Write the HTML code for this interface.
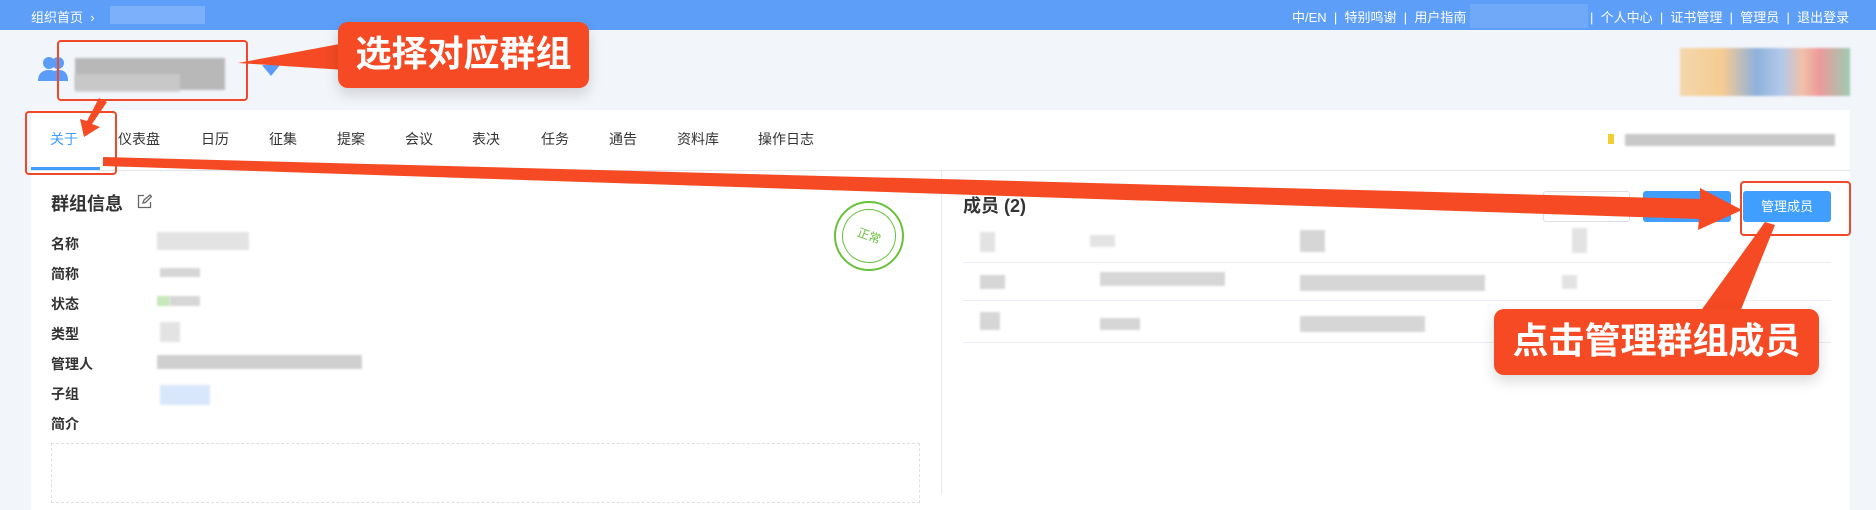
<!DOCTYPE html>
<html><head><meta charset="utf-8"><style>
*{margin:0;padding:0;box-sizing:border-box}
body{width:1876px;height:494px;overflow:hidden;background:#f2f5fa;font-family:"Liberation Sans","Noto Sans CJK SC",sans-serif;position:relative;color:#333}
.a{position:absolute}
.top{left:0;top:0;width:1876px;height:30px;background:#5c9ef8;color:#fff;font-size:13px}
.card{left:31px;top:110px;width:1819px;height:400px;background:#fff}
.tab{position:absolute;top:129px;font-size:14px;color:#333}
.lbl{position:absolute;left:51px;font-size:14px;color:#333;font-weight:bold}
.blur{position:absolute;background:#ccc;opacity:.8;filter:blur(1px)}
.btn{position:absolute;top:191px;height:31px;border-radius:3px;font-size:13px;color:#fff;text-align:center;line-height:31px}
.call{position:absolute;background:#f54a23;color:#fff;font-weight:bold;border-radius:10px;text-align:center;box-shadow:0 6px 14px rgba(0,0,0,.15)}
.rb{position:absolute;border:2px solid #f0492a;border-radius:4px}
</style></head><body>
<div class="a top">
 <span class="a" style="left:31px;top:7px">组织首页 &nbsp;›</span>
 <div class="a" style="left:110px;top:6px;width:95px;height:18px;background:#8ab8fb;opacity:.7"></div>
 <span class="a" style="left:1292px;top:7px;white-space:nowrap">中/EN &nbsp;| &nbsp;特别鸣谢 &nbsp;| &nbsp;用户指南</span>
 <div class="a" style="left:1470px;top:4px;width:118px;height:24px;background:#7aaefa;opacity:.7"></div>
 <span class="a" style="left:1590px;top:7px;white-space:nowrap">| &nbsp;个人中心 &nbsp;| &nbsp;证书管理 &nbsp;| &nbsp;管理员 &nbsp;| &nbsp;退出登录</span>
</div>
<svg class="a" style="left:38px;top:55px" width="30" height="28" viewBox="0 0 30 28"><circle cx="11" cy="8" r="6" fill="#5a9cf8"/><circle cx="20" cy="8" r="6" fill="#5a9cf8"/><path d="M0 26c0-8 5-11 11-11s11 3 11 11z" fill="#5a9cf8"/><path d="M12 26c0-8 4-11 9-11s9 3 9 11z" fill="#5a9cf8"/></svg>
<div class="blur" style="left:75px;top:58px;width:150px;height:32px;background:#aaa"></div>
<div class="blur" style="left:75px;top:74px;width:105px;height:18px;background:#ccc"></div>
<div class="a" style="left:262px;top:65px;width:0;height:0;border-left:9px solid transparent;border-right:9px solid transparent;border-top:11px solid #5a9cf8"></div>
<div class="a" style="left:1680px;top:48px;width:170px;height:48px;background:linear-gradient(90deg,#f5d3a0 0,#f6c480 25%,#7ea6d8 45%,#a8c2e6 60%,#f3b89b 72%,#ec8a8a 82%,#8fc4a6 100%);opacity:.85;filter:blur(1px)"></div>
<div class="a card"></div>
<div class="tab" style="left:50px;color:#409eff">关于</div>
<div class="a" style="left:31px;top:167px;width:69px;height:3px;background:#409eff"></div>
<div class="tab" style="left:118px">仪表盘</div><div class="tab" style="left:201px">日历</div><div class="tab" style="left:269px">征集</div><div class="tab" style="left:337px">提案</div><div class="tab" style="left:405px">会议</div><div class="tab" style="left:472px">表决</div><div class="tab" style="left:541px">任务</div><div class="tab" style="left:609px">通告</div><div class="tab" style="left:677px">资料库</div><div class="tab" style="left:758px">操作日志</div>
<div class="a" style="left:1608px;top:134px;width:6px;height:10px;background:#f0d030"></div>
<div class="blur" style="left:1625px;top:134px;width:210px;height:12px;background:#bbb"></div>
<div class="a" style="left:31px;top:170px;width:1819px;height:1px;background:#e2e4ec"></div>
<div class="a" style="left:941px;top:171px;width:1px;height:323px;background:#e8eaf0"></div>
<div class="a" style="left:51px;top:190px;font-size:18px;font-weight:bold">群组信息</div>
<svg class="a" style="left:137px;top:194px" width="15" height="15" viewBox="0 0 15 15" fill="none" stroke="#666" stroke-width="1.3"><path d="M7 1.5H1.5v12h12V8"/><path d="M6 9l1-3 6-5 1.5 1.5-6 6z"/></svg>
<div class="lbl" style="top:234px">名称</div><div class="lbl" style="top:264px">简称</div><div class="lbl" style="top:294px">状态</div><div class="lbl" style="top:324px">类型</div><div class="lbl" style="top:354px">管理人</div><div class="lbl" style="top:384px">子组</div><div class="lbl" style="top:414px">简介</div>
<div class="blur" style="left:157px;top:232px;width:92px;height:18px;background:#ddd"></div>
<div class="blur" style="left:160px;top:268px;width:40px;height:9px"></div>
<div class="blur" style="left:157px;top:296px;width:13px;height:10px;background:#b8e2a8"></div>
<div class="blur" style="left:170px;top:296px;width:30px;height:10px"></div>
<div class="blur" style="left:160px;top:322px;width:20px;height:20px;background:#ddd"></div>
<div class="blur" style="left:157px;top:355px;width:205px;height:14px;background:#c5c5c5"></div>
<div class="blur" style="left:160px;top:385px;width:50px;height:20px;background:#cfe2fb"></div>
<div class="a" style="left:51px;top:443px;width:869px;height:60px;border:1px dashed #dcdfe6"></div>
<div class="a" style="left:834px;top:201px;width:70px;height:70px;border:2px solid #67c23a;border-radius:50%"></div>
<div class="a" style="left:842px;top:209px;width:54px;height:54px;border:1px solid #67c23a;border-radius:50%;color:#67c23a;font-size:12px;text-align:center;line-height:52px;transform:rotate(20deg)">正常</div>
<div class="a" style="left:963px;top:192px;font-size:18px;font-weight:bold">成员 (2)</div>
<div class="btn" style="left:1543px;width:87px;border:1px solid #dcdfe6;color:#999">导出成员</div>
<div class="btn" style="left:1643px;width:88px;background:#409eff">添加成员</div>
<div class="btn" style="left:1743px;width:88px;background:#409eff">管理成员</div>
<div class="a" style="left:963px;top:262px;width:868px;height:1px;background:#ebeef5"></div>
<div class="a" style="left:963px;top:300px;width:868px;height:1px;background:#ebeef5"></div>
<div class="a" style="left:963px;top:342px;width:868px;height:1px;background:#ebeef5"></div>
<div class="blur" style="left:980px;top:232px;width:15px;height:20px;background:#ddd"></div>
<div class="blur" style="left:1090px;top:235px;width:25px;height:12px;background:#ddd"></div>
<div class="blur" style="left:1300px;top:230px;width:25px;height:22px;background:#ccc"></div>
<div class="blur" style="left:1572px;top:228px;width:15px;height:25px;background:#ddd"></div>
<div class="blur" style="left:980px;top:275px;width:25px;height:14px"></div>
<div class="blur" style="left:1100px;top:272px;width:125px;height:14px"></div>
<div class="blur" style="left:1300px;top:275px;width:185px;height:16px"></div>
<div class="blur" style="left:1562px;top:275px;width:15px;height:14px;background:#ddd"></div>
<div class="blur" style="left:980px;top:312px;width:20px;height:18px"></div>
<div class="blur" style="left:1100px;top:318px;width:40px;height:12px"></div>
<div class="blur" style="left:1300px;top:316px;width:125px;height:16px"></div>
<div class="rb" style="left:57px;top:40px;width:191px;height:61px"></div>
<div class="rb" style="left:25px;top:111px;width:92px;height:64px"></div>
<div class="rb" style="left:1740px;top:181px;width:111px;height:55px"></div>
<svg class="a" style="left:0;top:0" width="1876" height="494">
<polygon points="238,63 345,43 345,70" fill="#f54a23"/>
<polygon points="99,98 107,102 92,124 100,127 84,137 80,119 87,121" fill="#f54a23"/>
<polygon points="103,157 1700,199 1700,188 1742,210 1698,230 1699,219 103,166" fill="#f54a23"/>
<polygon points="1765,222 1775,225 1740,312 1700,312" fill="#f54a23"/>
</svg>
<div class="call" style="left:338px;top:22px;width:251px;height:66px;font-size:36px;line-height:64px">选择对应群组</div>
<div class="call" style="left:1494px;top:309px;width:325px;height:66px;font-size:36px;line-height:64px">点击管理群组成员</div>
</body></html>
